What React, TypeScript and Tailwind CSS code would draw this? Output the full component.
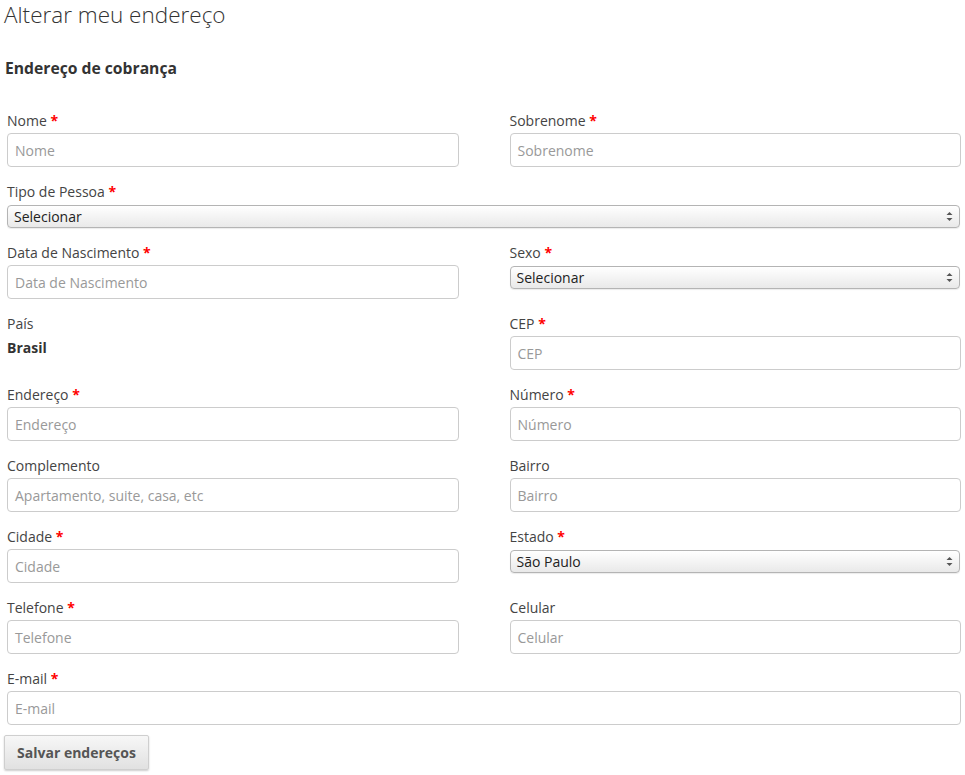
import React from "react";

const font = { fontFamily: '"Open Sans", "Noto Sans", sans-serif' };

function Label({ text, req }: { text: string; req?: boolean }) {
  return (
    <div className="pt-[1px] text-[14px] leading-[20px] text-[#444]">
      {text}
      {req && <span className="text-[#ff0000] font-bold"> *</span>}
    </div>
  );
}

function Input({ ph }: { ph: string }) {
  return (
    <div className="mt-[2px] h-[34px] w-full rounded-[4px] border border-[#cccccc] bg-white flex items-center pl-[7px]">
      <span className="text-[14px] text-[#999999]">{ph}</span>
    </div>
  );
}

function Select({ value }: { value: string }) {
  return (
    <div className="mt-[3px] h-[23px] w-full rounded-[4px] border border-[#b4b4b4] bg-gradient-to-b from-[#ffffff] to-[#e9e9e9] shadow-[0_1px_1px_rgba(0,0,0,0.08)] flex items-center justify-between pl-[6px] pr-[6px]">
      <span className="text-[14px] text-[#222]">{value}</span>
      <svg width="7" height="11" viewBox="0 0 7 11">
        <path d="M3.5 1 L6.5 4 L0.5 4 Z" fill="#555" />
        <path d="M3.5 10 L6.5 7 L0.5 7 Z" fill="#555" />
      </svg>
    </div>
  );
}

function Field({ label, req, ph }: { label: string; req?: boolean; ph: string }) {
  return (
    <div>
      <Label text={label} req={req} />
      <Input ph={ph} />
    </div>
  );
}

export default function App() {
  return (
    <div className="w-[965px] h-[775px] bg-white overflow-hidden" style={font}>
      <h1 className="ml-[4px] text-[22.5px] leading-[30px] font-light text-[#333]">
        Alterar meu endereço
      </h1>
      <h2 className="mt-[28px] ml-[5px] text-[15.7px] leading-[20px] font-bold text-[#333]">
        Endereço de cobrança
      </h2>
      <div className="mt-[32px] pl-[7px] pr-[4px] grid grid-cols-2 gap-x-[51px] gap-y-[14px] items-start">
        <Field label="Nome" req ph="Nome" />
        <Field label="Sobrenome" req ph="Sobrenome" />
        <div className="col-span-2 pr-[1px]">
          <Label text="Tipo de Pessoa" req />
          <Select value="Selecionar" />
        </div>
        <Field label="Data de Nascimento" req ph="Data de Nascimento" />
        <div className="pr-[1px]">
          <Label text="Sexo" req />
          <Select value="Selecionar" />
        </div>
        <div>
          <Label text="País" />
          <div className="mt-[4px] text-[14px] leading-[20px] font-bold text-[#333]">Brasil</div>
        </div>
        <Field label="CEP" req ph="CEP" />
        <Field label="Endereço" req ph="Endereço" />
        <Field label="Número" req ph="Número" />
        <Field label="Complemento" ph="Apartamento, suite, casa, etc" />
        <Field label="Bairro" ph="Bairro" />
        <Field label="Cidade" req ph="Cidade" />
        <div className="pr-[1px]">
          <Label text="Estado" req />
          <Select value="São Paulo" />
        </div>
        <Field label="Telefone" req ph="Telefone" />
        <Field label="Celular" ph="Celular" />
        <div className="col-span-2">
          <Field label="E-mail" req ph="E-mail" />
        </div>
      </div>
      <button className="mt-[10px] ml-[4px] w-[145px] h-[35px] rounded-[2px] border border-[#cfcfcf] bg-gradient-to-b from-[#f7f7f7] to-[#e1e1e1] shadow-[0_1px_2px_rgba(0,0,0,0.2)] text-[14px] font-bold text-[#555]">
        Salvar endereços
      </button>
    </div>
  );
}
